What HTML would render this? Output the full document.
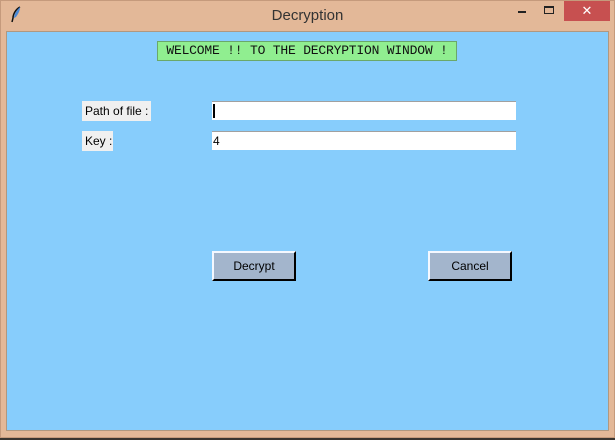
<!DOCTYPE html>
<html><head><meta charset="utf-8"><style>
*{margin:0;padding:0;box-sizing:border-box}
body{width:615px;height:440px;overflow:hidden;background:#3a3530;position:relative;font-family:"Liberation Sans",sans-serif}
.frame{position:absolute;left:0;top:0;width:615px;height:438px;background:#e3b898;border:1px solid #c59a7c}
.title{position:absolute;left:0;top:7px;width:615px;text-align:center;font-size:15px;color:#333}
.client{position:absolute;left:6px;top:31px;width:603px;height:400px;background:#87cdfc;border:1px solid #b09880}
.close{position:absolute;left:564px;top:1px;width:46px;height:20px;background:#c75050;color:#fff;text-align:center;font-size:13px;line-height:20px}
.min{position:absolute;left:518px;top:11px;width:8px;height:2px;background:#222}
.max{position:absolute;left:544px;top:6px;width:10px;height:8px;border:1px solid #222;border-top-width:2px}
.abs{position:absolute}
.banner{left:157px;top:41px;width:300px;height:20px;background:#90ee90;border:1px solid #6aa86a;font-family:"Liberation Mono",monospace;font-size:13px;line-height:18px;text-align:center;color:#111;white-space:nowrap;letter-spacing:-0.2px}
.lbl{background:#f0f0f0;font-size:12px;line-height:20px;padding-left:3px;color:#000;height:20px}
.entry{left:212px;width:304px;height:19px;background:#fff;border-top:1px solid #a0a0a0;font-size:12px;line-height:18px;padding-left:1px}
.btn{top:251px;width:84px;height:30px;background:#a3b5cc;border:2px solid;border-color:#f4f8ff #000 #000 #f4f8ff;font-size:12px;text-align:center;line-height:26px;color:#000}
</style></head><body>
<div class="frame"></div>
<svg class="abs" style="left:10px;top:6px" width="12" height="18" viewBox="0 0 12 18"><path d="M10 1 C6 3 3 8 3 12 L2 16" stroke="#111" stroke-width="1.5" fill="none"/><path d="M10 1 C7 4 4 8 4 12 L6 11 C8 8 10 5 10 1Z" fill="#4a8ad8"/></svg>
<div class="title">Decryption</div>
<div class="min"></div><div class="max"></div>
<div class="close">✕</div>
<div class="client"></div>
<div class="abs banner">WELCOME !! TO THE DECRYPTION WINDOW !</div>
<div class="abs lbl" style="left:82px;top:101px;width:69px">Path of file :</div>
<div class="abs lbl" style="left:82px;top:131px;width:31px">Key :</div>
<div class="abs entry" style="top:101px"><span style="display:inline-block;width:2px;height:14px;background:#000;margin-top:2px"></span></div>
<div class="abs entry" style="top:131px">4</div>
<div class="abs btn" style="left:212px">Decrypt</div>
<div class="abs btn" style="left:428px">Cancel</div>
</body></html>
